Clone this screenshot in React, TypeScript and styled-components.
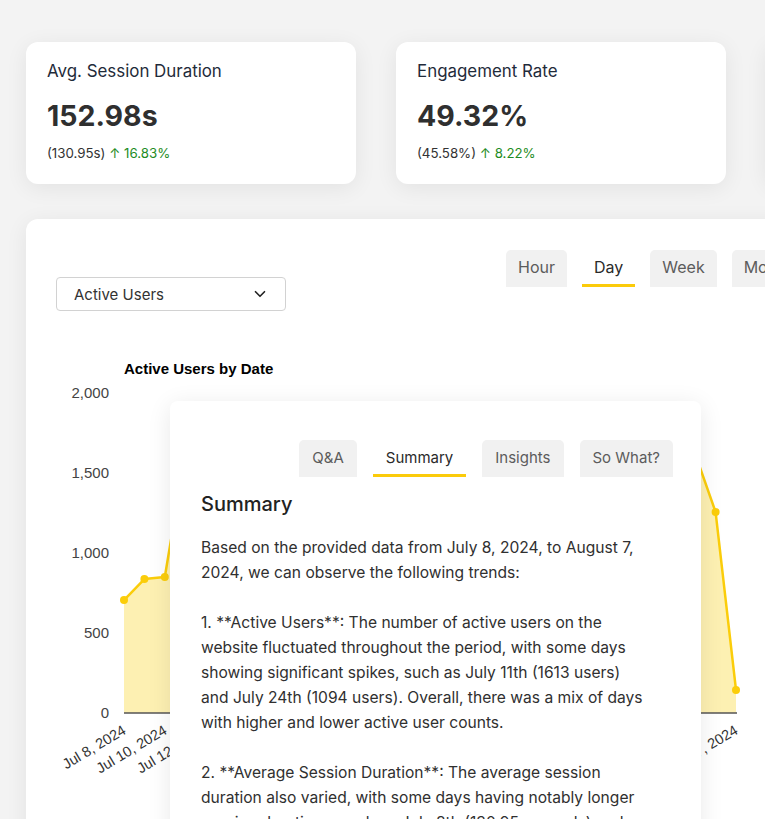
import styled, { createGlobalStyle } from "styled-components";
import { ChevronDown } from "lucide-react";

const GlobalStyle = createGlobalStyle`
  body {
    margin: 0;
    background: #f3f3f3;
    overflow: hidden;
    font-family: Inter, "Noto Sans", sans-serif;
  }
`;

const Page = styled.div`
  width: 765px;
  height: 819px;
  padding: 42px 0 0 26px;
  box-sizing: border-box;
  overflow: hidden;
`;

const CardsRow = styled.div`
  display: flex;
  gap: 40px;
`;

const StatCard = styled.div`
  flex-shrink: 0;
  width: 330px;
  height: 142px;
  box-sizing: border-box;
  padding: 18px 21px;
  background: #fff;
  border-radius: 12px;
  box-shadow: 0 4px 22px rgba(0, 0, 0, 0.07);
`;

const StatTitle = styled.div`
  font-size: 16.9px;
  line-height: 22px;
  color: #1f2b3a;
`;

const StatValue = styled.div`
  margin-top: 16px;
  font-size: 28.5px;
  font-weight: 700;
  line-height: 36px;
  color: #2f2f2f;
`;

const StatSub = styled.div`
  margin-top: 10px;
  font-size: 13.3px;
  line-height: 18px;
  color: #333;
`;

const Delta = styled.span`
  color: #1e8c24;
`;

const ChartCard = styled.div`
  position: relative;
  margin-top: 35px;
  width: 1000px;
  height: 700px;
  box-sizing: border-box;
  padding: 31px 30px;
  background: #fff;
  border-radius: 12px;
  box-shadow: 0 4px 22px rgba(0, 0, 0, 0.07);
`;

const Header = styled.div`
  display: flex;
  align-items: flex-start;
`;

const Select = styled.div`
  margin-top: 27px;
  width: 230px;
  height: 34px;
  box-sizing: border-box;
  padding: 0 16px 0 17px;
  display: flex;
  align-items: center;
  justify-content: space-between;
  border: 1px solid #d2d2d2;
  border-radius: 4px;
  font-size: 15px;
  color: #333;
`;

const Tabs = styled.div<{ $offset?: number }>`
  display: flex;
  gap: 15px;
  margin-left: ${(p) => p.$offset ?? 0}px;
`;

const Tab = styled.div<{ $active?: boolean }>`
  height: 37px;
  box-sizing: border-box;
  padding: 0 12px;
  display: flex;
  align-items: center;
  font-size: 16px;
  white-space: nowrap;
  color: ${(p) => (p.$active ? "#2a2a2a" : "#5c5c5c")};
  background: ${(p) => (p.$active ? "transparent" : "#f1f1f1")};
  border-radius: 5px 5px 0 0;
  border-bottom: 3px solid ${(p) => (p.$active ? "#fbcb0a" : "transparent")};
`;

const ChartSvg = styled.svg`
  display: block;
  margin-top: 39px;
  overflow: visible;
`;

const Panel = styled.div`
  position: absolute;
  left: 144px;
  top: 182px;
  width: 531px;
  height: 520px;
  box-sizing: border-box;
  padding: 39px 28px 0 31px;
  background: #fff;
  border-radius: 8px;
  box-shadow: 0 4px 24px rgba(0, 0, 0, 0.09);
`;

const PanelTabs = styled(Tabs)`
  gap: 16px;
  justify-content: flex-end;
`;

const PanelTab = styled(Tab)`
  padding: 0 13px;
  font-size: 15px;
`;

const PanelHeading = styled.div`
  margin-top: 13px;
  font-size: 20px;
  line-height: 28px;
  font-weight: 500;
  color: #222;
`;

const PanelBody = styled.div`
  margin-top: 17px;
  max-width: 450px;
  font-size: 15.6px;
  line-height: 25px;
  color: #303030;
  white-space: pre-wrap;
`;

const values = [
  706, 837, 850, 1613, 1180, 920, 870, 1010, 1240, 980, 890, 1060, 960, 1120,
  1350, 1020, 1094, 880, 940, 1150, 1030, 970, 1210, 1080, 930, 1170, 1300,
  1420, 1619, 1256, 144,
];

const stats = [
  { title: "Avg. Session Duration", value: "152.98s", prev: "(130.95s)", delta: "16.83%" },
  { title: "Engagement Rate", value: "49.32%", prev: "(45.58%)", delta: "8.22%" },
];

function dayLabel(i: number) {
  const d = 8 + i;
  return d <= 31 ? `Jul ${d}, 2024` : `Aug ${d - 31}, 2024`;
}

const X0 = 68;
const STEP = 20.4;
const BASE = 363;
const yOf = (v: number) => BASE - v * 0.16;
const AXIS_FONT = "Liberation Sans, Arial, sans-serif";

function ActiveUsersChart() {
  const pts = values.map((v, i) => [X0 + i * STEP, yOf(v)] as const);
  const line = pts.map(([x, y]) => `${x},${y}`).join(" ");
  const area = `${X0},${BASE} ${line} ${pts[pts.length - 1][0]},${BASE}`;
  const ticks = [0, 500, 1000, 1500, 2000];

  return (
    <ChartSvg width={720} height={450}>
      <text x={68} y={24} fontFamily={AXIS_FONT} fontSize={15} fontWeight={700} fill="#000">
        Active Users by Date
      </text>
      {ticks.map((t) => (
        <text key={t} x={53} y={yOf(t) + 5} textAnchor="end" fontFamily={AXIS_FONT} fontSize={15} fill="#444">
          {t.toLocaleString("en-US")}
        </text>
      ))}
      <polygon points={area} fill="#fdf0b2" />
      <polyline points={line} fill="none" stroke="#fbcd0a" strokeWidth={2.5} strokeLinejoin="round" />
      {pts.map(([x, y], i) => (
        <circle key={i} cx={x} cy={y} r={4} fill="#fbcd0a" />
      ))}
      <line x1={X0} y1={BASE} x2={pts[pts.length - 1][0] + 1} y2={BASE} stroke="#555" strokeWidth={1.5} />
      {pts.map(([x], i) =>
        i % 2 === 0 ? (
          <text
            key={i}
            x={x + 3}
            y={BASE + 20}
            textAnchor="end"
            transform={`rotate(-31 ${x + 3} ${BASE + 20})`}
            fontFamily={AXIS_FONT}
            fontSize={14.5}
            fill="#333"
          >
            {dayLabel(i)}
          </text>
        ) : null
      )}
    </ChartSvg>
  );
}

const summary = `Based on the provided data from July 8, 2024, to August 7, 2024, we can observe the following trends:

1. **Active Users**: The number of active users on the website fluctuated throughout the period, with some days showing significant spikes, such as July 11th (1613 users) and July 24th (1094 users). Overall, there was a mix of days with higher and lower active user counts.

2. **Average Session Duration**: The average session duration also varied, with some days having notably longer session durations, such as July 8th (130.95 seconds) and July 17th.`;

export default function App() {
  return (
    <>
      <GlobalStyle />
      <Page>
        <CardsRow>
          {stats.map((s) => (
            <StatCard key={s.title}>
              <StatTitle>{s.title}</StatTitle>
              <StatValue>{s.value}</StatValue>
              <StatSub>
                {s.prev} <Delta>↑ {s.delta}</Delta>
              </StatSub>
            </StatCard>
          ))}
          <StatCard />
        </CardsRow>

        <ChartCard>
          <Header>
            <Select>
              Active Users
              <ChevronDown size={18} strokeWidth={2.2} color="#222" />
            </Select>
            <Tabs $offset={220}>
              <Tab>Hour</Tab>
              <Tab $active>Day</Tab>
              <Tab>Week</Tab>
              <Tab>Month</Tab>
            </Tabs>
          </Header>

          <ActiveUsersChart />

          <Panel>
            <PanelTabs>
              <PanelTab>Q&amp;A</PanelTab>
              <PanelTab $active>Summary</PanelTab>
              <PanelTab>Insights</PanelTab>
              <PanelTab>So What?</PanelTab>
            </PanelTabs>
            <PanelHeading>Summary</PanelHeading>
            <PanelBody>{summary}</PanelBody>
          </Panel>
        </ChartCard>
      </Page>
    </>
  );
}
